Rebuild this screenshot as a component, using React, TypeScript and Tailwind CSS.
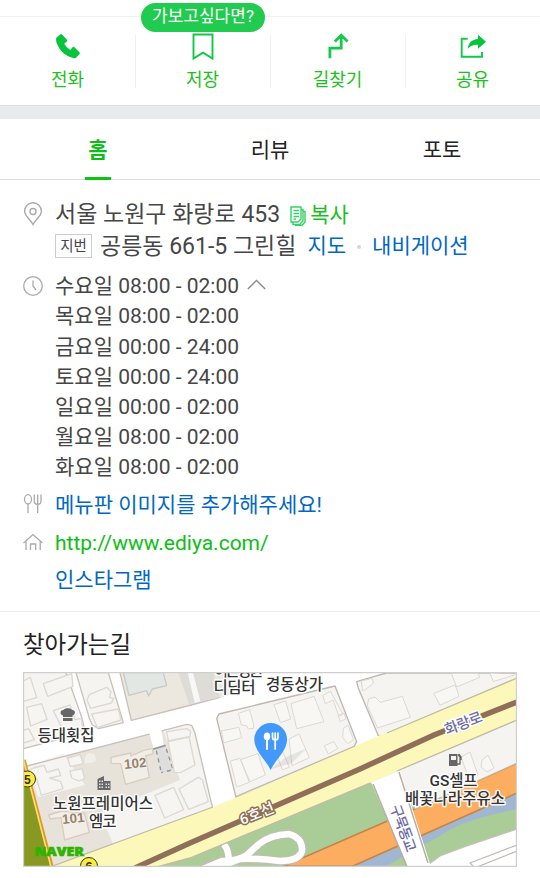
import type { ReactNode } from "react";

const actions = [
  {
    label: "전화",
    icon: (
      <svg width="26" height="26" viewBox="0 0 26 26" fill="#06c43c">
        <path d="M1.3 4.8 5.6 1.2Q6.3.8 7 1.6L12 6.8Q12.5 7.5 12 8.2L9.2 10.8Q11.4 14.8 15.3 17L17.6 14.2Q18.4 13.5 19.2 14.1L24.6 19.5Q25.2 20.2 24.6 21L21 24.7Q20 25.5 18.6 25.2 6.5 22.6 1.6 10 .6 6.6 1.3 4.8Z" />
      </svg>
    ),
  },
  {
    label: "저장",
    icon: (
      <svg width="26" height="28" viewBox="0 0 26 28" fill="none" stroke="#0fc943" strokeWidth="1.9">
        <path d="M3.5 1.5h19v24L13 19.6 3.5 25.5Z" />
      </svg>
    ),
  },
  {
    label: "길찾기",
    icon: (
      <svg width="26" height="26" viewBox="0 0 26 26" fill="none" stroke="#14c94b" strokeWidth="2.8">
        <path d="M4.9 25.2V15.2H16.2V2.2M9.8 8.5 16.2 2.2 22.6 8.5" />
      </svg>
    ),
  },
  {
    label: "공유",
    icon: (
      <svg width="28" height="26" viewBox="0 0 28 26">
        <path d="M8.7 5.7H2.700v18H23V19" fill="none" stroke="#12c94a" strokeWidth="1.9" />
        <path d="M8.700 15.8C9.500 10 12.700 6.400 19 6V1.800L27 8.800 19 15.800V11.700C14.600 11.500 11.300 12.500 8.700 15.800Z" fill="#06c43c" />
      </svg>
    ),
  },
];

const tabs = ["홈", "리뷰", "포토"];

const hours = [
  "목요일 08:00 - 02:00",
  "금요일 00:00 - 24:00",
  "토요일 00:00 - 24:00",
  "일요일 00:00 - 02:00",
  "월요일 08:00 - 02:00",
  "화요일 08:00 - 02:00",
];

function Row({
  icon,
  children,
  className = "",
  shift = "pt-1",
}: {
  icon?: ReactNode;
  children: ReactNode;
  className?: string;
  shift?: string;
}) {
  return (
    <div className={`flex items-center ${className}`}>
      <span className="flex w-5 shrink-0 justify-center">{icon}</span>
      <div className={`ml-3 flex items-center whitespace-nowrap ${shift}`}>{children}</div>
    </div>
  );
}

function RouteMap() {
  const label = "fill-[#333333] stroke-white/90 stroke-[3px] [paint-order:stroke] font-medium";
  return (
    <svg className="block h-[195px] w-[494px]" viewBox="23 672 494 195" strokeLinejoin="round">
      <rect x="23" y="672" width="494" height="195" fill="#ffffff" />

      {/* western blocks */}
      <g transform="translate(20 670) scale(.33333)" stroke="#c9c0b9" strokeWidth="4">
        <path d="M10 8H142L190 188 10 235Z" fill="#f5f4f0" stroke="none" />
        <path d="M138 8 186 145 196 186M10 236 190 189" fill="none" />
        <path d="M168 8 208 145 217 165 236 176 310 158 265 8Z" fill="#f5f4f0" />
        <path d="M300 8 334 151 525 102 690 60V8Z" fill="#ece8e0" stroke="none" />
        <path d="M300 8 334 151 525 102 600 82" fill="none" />
        <path d="M475 8 507 103 600 82 580 8Z" fill="#dddcd6" stroke="none" />
        <path d="M503 8 524 98 541 94 519 8Z" fill="#f8f8f8" stroke="none" />
        <path d="M310 8 327 76 380 62 386 78 397 57 440 47 430 8Z" fill="#e3e7e3" stroke="#c7cbc7" />
        <path d="M10 291 500 163 515 166 525 190 578 415 90 590Z" fill="#e7e3da" stroke="none" />
        <path d="M10 292 130 250 195 345 55 382 40 340Z" fill="#f5f4f0" stroke="none" />
        <path d="M430 181 500 163 515 166 525 190 578 415 280 523 238 430 480 330Z" fill="#f5f4f0" stroke="none" />
        <path d="M10 291 500 163 515 166 525 190 578 415" fill="none" />
        <path d="M388 188 424 179 432 229 400 235Z" fill="#fff" stroke="none" />
        <path d="M410 233 438 227 460 299 424 308Z" fill="#dedede" stroke="none" />
        <path d="M397 238 437 226" stroke="#999" strokeWidth="5" />
        <path d="M409 242 424 308M439 237 459 299 424 308" fill="none" stroke="#929292" strokeDasharray="12 12" />
        <path d="M195 265Q200 243 224 253L228 274 211 279 195 280Z" fill="#f1efea" stroke="none" />
        <g fill="#f7f5f1" stroke="#dcd8d2">
          <path d="M10 33 31 22 50 83 10 94ZM70 41 155 11 159 49 83 79ZM20 112 65 101 81 148 32 168ZM10 181 26 176 43 209 10 219Z" />
          <path d="M100 122 150 105 165 149 185 145 188 182 130 181Z" />
          <path d="M208 74 260 52 273 65 268 82 281 85 274 99 212 115 201 90ZM215 132 295 117 303 150 232 173Z" />
          <path d="M10 309 40 294 72 286 81 307 115 297 122 317 89 324 122 335 129 356 64 376 50 325 10 330Z" />
          <path d="M143 264 181 254 189 281 151 290ZM150 303 186 296 194 326 177 333 155 324Z" />
          <path d="M444 215 507 201 525 285 482 307 463 308ZM440 185 500 176 512 184 510 199 445 213Z" />
          <path d="M405 376 461 352 491 419 434 444ZM477 357 535 322 547 329 565 395 506 418Z" />
        </g>
        <path d="M273 262 332 249 333 258 371 241 398 235 399 251 377 258 388 322 317 343 302 281 273 280Z" fill="#f1ede7" stroke="#d7cdbf" />
        <path d="M86 435 126 423 193 429 208 487 134 510 123 443 91 447Z" fill="#f1ede7" stroke="#d7cdbf" />
      </g>

      {/* central block */}
      <g transform="translate(190 665) scale(.33333)" stroke="#c0b6b1" strokeWidth="4">
        <path d="M80 160 87 147 435 63 500 230 492 245 290 345 138 397Z" fill="#f5f4f0" />
        <path d="M540 38 500 50 505 70 565 212 580 220 985 50V24H590Z" fill="#f5f4f0" />
        <g fill="#f8f7f3" stroke="#dcd8d3" strokeWidth="3">
          <path d="M145 145 179 134 190 175 191 190 175 192 169 182 154 180ZM94 198 147 187 155 218 101 234ZM252 119 287 108 302 162 271 173ZM303 116 372 94 402 170 320 191Z" />
          <path d="M398 91 421 79 459 148 447 154 429 105 406 116ZM445 151 462 144 468 162 450 170ZM460 190 474 181 491 224 473 236 458 218ZM403 243 431 230 444 250 415 267Z" />
          <path d="M297 222 327 207 358 278 306 302ZM121 288 150 280 178 352 140 366ZM152 284 204 266 226 330 180 350ZM272 245 298 307 277 314 254 254Z" />
        </g>
        <path d="M242 313 290 275 350 250 305 295Z" fill="#777" opacity=".15" stroke="none" />
      </g>
      <g transform="translate(360 665) scale(.33333)" fill="#f8f7f3" stroke="#dcd8d3" strokeWidth="3">
        <path d="M4 48 37 40 40 55 18 72 8 78ZM22 122 26 102 45 96 61 112 127 94 151 157 53 189ZM221 85 286 60 297 94 240 121ZM274 25 290 66 359 37 354 25ZM390 25 400 50 466 29" />
      </g>

      {/* greenery, expressway, stream */}
      <path d="M140 867 370 780 517 715V867Z" fill="#aacd98" />
      <path d="M352 867 517 793V809Q460 820 440 836 410 852 385 867Z" fill="#a1b6d0" />
      <path d="M284 866 392 819 517 763V793L353 866Z" fill="#fcad60" stroke="#c38446" strokeWidth="1.4" />
      <path d="M397 771 517 719V763L415 809Z" fill="#f5f4f0" stroke="#c0b9b4" strokeWidth="1" />
      <path d="M425 867 440 856 464 847 517 829V868Z" fill="#fff" stroke="#c5bfba" strokeWidth="1.2" />
      <path d="M474 867 470 863 517 845M477 867 517 851" fill="none" stroke="#c0b9b4" strokeWidth="1.2" />
      <path d="M461 757 470 752 478 775 469 779ZM482 760 488 755 494 768 487 772 481 767Z" fill="#f8f7f3" stroke="#dcd8d3" />
      <path d="M371 782 400 770 431 867H408Z" fill="#fff" />
      <path d="M373 784 407 867M399 772 428 863" fill="none" stroke="#b8aea5" strokeWidth="1.5" />
      <path d="M223 844Q228 847 229 860M203 867 222 861Q237 861 247 855L259 844Q270 835 289 834 303 838 302 851 299 861 280 861 257 858 240 859L211 868" fill="none" stroke="#c3bcb6" strokeWidth="8.5" />
      <path d="M223 844Q228 847 229 860M203 869 222 861Q237 861 247 855L259 844Q270 835 289 834 303 838 302 851 299 861 280 861 257 858 240 859L211 870" fill="none" stroke="#fff" strokeWidth="6.5" />

      {/* main road with subway line */}
      <path d="M50 867 213 807 290 775 355 746 388 732 517 677V720L398 771 370 783 190 858 157 867Z" fill="#fbf8b9" />
      <path d="M50 867 213 807M235 797 355 746M387 733 517 678M157 867 190 858 370 783M397 771 517 720" fill="none" stroke="#c0b9a8" strokeWidth="1.3" />
      <path d="M135 868 190 843 360 769 434 735 517 702" fill="none" stroke="#8f6f58" strokeWidth="5.5" />

      {/* western line */}
      <path d="M23 762 53 867H23Z" fill="#879923" />
      <path d="M24 760 52 867" stroke="#d99a29" strokeWidth="3.5" />
      <path d="M23.5 760 51 867" stroke="#ffe269" strokeWidth="1.5" />
      <circle cx="27.5" cy="779" r="8" fill="#ffeb3c" stroke="#333" strokeWidth="1" />
      <circle cx="89" cy="866" r="8.5" fill="#ffeb3c" stroke="#333" strokeWidth="1" />

      <g fontFamily="'Liberation Sans', sans-serif" fill="#333">
        <text x="24" y="783.5" fontSize="12" fontWeight="700">5</text>
        <text x="85.3" y="871" fontSize="13" fontWeight="700">6</text>
        <g fill="#97836d" stroke="#f7f3ec" strokeWidth="1.5" paintOrder="stroke" fontSize="13.5" fontWeight="700">
          <text x="124.5" y="769" transform="rotate(-6 124 769)">102</text>
          <text x="62.5" y="824" transform="rotate(-6 62 824)">101</text>
        </g>
      </g>

      {/* place labels */}
      <g className={label} fontSize="15.5">
        <text x="37.5" y="740.5" textLength="57">등대횟집</text>
        <text x="53" y="809" textLength="100">노원프레미어스</text>
        <text x="89" y="827" textLength="27.5">엠코</text>
        <text x="214" y="675.5" textLength="49">이든병원</text>
        <text x="213.5" y="692.5" textLength="42">디딤터</text>
        <text x="266" y="690" textLength="57">경동상가</text>
        <text x="429.5" y="785.5" textLength="48">GS셀프</text>
        <text x="405" y="804" textLength="100">배꽃나라주유소</text>
      </g>
      <g fontSize="14.5" fontWeight="500" strokeWidth="3" paintOrder="stroke">
        <text x="242" y="825" transform="rotate(-22 242 825)" fill="#fff" stroke="#8f6f58" textLength="36">6호선</text>
        <text x="447" y="735" transform="rotate(-21 447 735)" fill="#6b6ba6" stroke="#fff" textLength="39">화랑로</text>
        <text x="390" y="807" transform="rotate(70 390 807)" fill="#6b6ba6" stroke="#fff" textLength="49">구묵동교</text>
      </g>

      {/* chef hat, building and fuel pump markers */}
      <path d="M63 717V715.500C59.500 714.500 59.800 709.800 63.500 710 64.500 707.500 71 707.500 72 710 75.700 709.800 76 714.500 72.500 715.500V717ZM63 718H72.500V721H63Z" fill="#666" />
      <g fill="#686868">
        <path d="M97.500 779 104 776V790H97.500ZM104 781H110.500V790H104Z" />
        <path d="M99 780.500h1.500v1.500H99zm2.500 0H103v1.500h-1.500zM99 783.500h1.500v1.500H99zm2.500 0H103v1.500h-1.500zM99 786.500h1.500v1.500H99zm2.500 0H103v1.500h-1.500zM105.500 783.500h1.500v1.500h-1.500zm2.500 0h1.500v1.500H108zM105.500 786.500h1.500v1.500h-1.500zm2.500 0h1.500v1.500H108z" fill="#ddd" />
      </g>
      <path d="M449 754H457.500V766H449ZM451 756V760H456V756Z" fill="#666" fillRule="evenodd" />
      <path d="M457 764H460V757L458 754.500M459 754 461 757V760" fill="none" stroke="#666" strokeWidth="1.3" />

      {/* destination pin */}
      <path d="M270.700 770C266 760 254.300 751 254.300 739.500A16.400 16.400 0 0 1 287.100 739.500C287.100 751 275 760 270.700 770Z" fill="#4399fb" />
      <ellipse cx="267" cy="736.500" rx="3.200" ry="3.900" fill="#fff" />
      <path d="M267 738V749" stroke="#fff" strokeWidth="2" strokeLinecap="round" />
      <path d="M272.500 733V737Q272.500 740 275.200 740 278 740 278 737V733M275.200 733V749" fill="none" stroke="#fff" strokeWidth="1.700" strokeLinecap="round" />

      <text x="34.500" y="855.500" fontFamily="'Open Sans', sans-serif" fontWeight="800" fontSize="12.500" textLength="49.500" lengthAdjust="spacingAndGlyphs" fill="#2db400" stroke="#2db400" strokeWidth=".7">NAVER</text>
      <rect x="23.500" y="672.500" width="493" height="194" fill="none" stroke="#cfcfcf" strokeWidth="1.300" />
    </svg>
  );
}

export default function App() {
  return (
    <main className="h-[878px] w-[540px] overflow-hidden bg-white font-['Roboto','Noto_Sans_CJK_KR',sans-serif] text-[21px] text-[#464646]">
      <div className="h-4" />
      <nav className="grid h-[89px] grid-cols-4 border-t border-[#f1f1f1]">
        {actions.map(({ label, icon }, i) => (
          <a key={label} className="relative flex flex-col items-center pt-4 text-[18px] text-[#1cc221]">
            {i > 0 && <span className="absolute top-[18px] left-0 h-[53px] w-px bg-[#f1f1f1]" />}
            <span className="flex h-7 items-start">{icon}</span>
            <span className="mt-[6px] leading-[26px]">{label}</span>
            {label === "저장" && (
              <span className="absolute top-[-14px] left-[6px] flex h-[29px] w-[124px] items-center justify-center rounded-full bg-[#20cb50] pb-px text-[17px] whitespace-nowrap text-white">
                가보고싶다면?
              </span>
            )}
          </a>
        ))}
      </nav>
      <div className="h-[14px] border-t border-[#dfe2e4] bg-[#e7ebee]" />

      <div className="grid h-[61px] grid-cols-3 border-b border-[#dedede] px-3 text-[#222]">
        {tabs.map((tab, i) => (
          <div key={tab} className={`flex justify-center ${i === 0 ? "font-bold text-[#0cbe16]" : ""}`}>
            <span className={`h-[61px] leading-[62px] ${i === 0 ? "w-[26px] border-b-[3px] border-[#0cc412] text-center" : ""}`}>{tab}</span>
          </div>
        ))}
      </div>

      <section className="h-[432px] border-b border-[#e8ebeb] pt-[18px] pl-[23px]">
        <Row
          className="h-8 text-[23px]"
          shift="pt-[3px]"
          icon={
            <svg width="20" height="24" viewBox="0 0 20 24" fill="none" stroke="#aaa" strokeWidth="1.4">
              <path d="M10 22.500C8 18 1.600 14 1.600 9.200A8.400 8.400 0 0 1 18.400 9.200C18.400 14 12 18 10 22.500Z" />
              <circle cx="10" cy="9.500" r="3" />
            </svg>
          }
        >
          <span>서울 노원구 화랑로 453</span>
          <svg className="ml-[10px]" width="16" height="20" viewBox="0 0 16 20" fill="none" stroke="#36d165" strokeWidth="1.400">
            <path d="M1 1H11V13L8 16H1ZM11 3.500H13V15L9.500 18.500H3V16M13 5.500H15V16L12 19.300H5" />
            <path d="M3.500 4.500H9M3.500 7.500H9M3.500 10.500H9M3.500 13H6" />
          </svg>
          <span className="ml-1 text-[21px] text-[#16c11b]">복사</span>
        </Row>
        <Row className="h-8 text-[23px]" shift="pt-[2px]">
          <span className="mr-2 -mt-[2px] flex h-6 w-[37px] items-center justify-center border border-[#ccc] pt-px text-[14.500px]">지번</span>
          <span>공릉동 661-5 그린힐</span>
          <span className="ml-[11px] text-[21px] text-[#0068c3]">지도</span>
          <span className="mx-[11px] size-1 rounded-full bg-[#d5d5d5]" />
          <span className="text-[21px] text-[#0068c3]">내비게이션</span>
        </Row>
        <Row
          className="mt-2 h-[30px]"
          icon={
            <svg className="mt-px" width="20" height="22" viewBox="0 0 20 22" fill="none" stroke="#aaa" strokeWidth="1.300">
              <circle cx="10" cy="11" r="9.300" />
              <path d="M10 5.500V11L13 15" />
            </svg>
          }
        >
          <span>수요일 08:00 - 02:00</span>
          <svg className="mb-1 ml-2" width="19" height="12" viewBox="0 0 19 12" fill="none" stroke="#888" strokeWidth="1.300">
            <path d="M.8 10 9.500 1.500 18.200 10" />
          </svg>
        </Row>
        {hours.map((h) => (
          <Row key={h} className="h-[30.200px]">{h}</Row>
        ))}
        <Row
          className="mt-2 h-[30px] text-[#0068c3]"
          icon={
            <svg width="20" height="20" viewBox="0 0 20 20" fill="none" stroke="#aaa" strokeWidth="1.300">
              <ellipse cx="5" cy="5.300" rx="3.500" ry="4.600" />
              <path d="M5 9.900V19M11.300 .5V7Q11.300 10.300 14.700 10.300 18 10.300 18 7V.5M14.700 .5V19" />
            </svg>
          }
        >
          메뉴판 이미지를 추가해주세요!
        </Row>
        <Row
          className="mt-2 h-[30px] text-[#0cbe16]"
          icon={
            <svg width="20" height="20" viewBox="0 0 20 20" fill="none" stroke="#aaa" strokeWidth="1.300">
              <path d="M.5 11 10 2.500 19.500 11M3 9.500V18M17.200 9.500V18M7.500 18V12H12.700V18" />
            </svg>
          }
        >
          http://www.ediya.com/
        </Row>
        <Row className="mt-[7px] h-[30px] text-[#0068c3]">인스타그램</Row>
      </section>

      <section className="pl-[23px]">
        <h2 className="h-[60px] text-[23.500px] leading-[67px] text-[#222]">찾아가는길</h2>
        <RouteMap />
      </section>
    </main>
  );
}
